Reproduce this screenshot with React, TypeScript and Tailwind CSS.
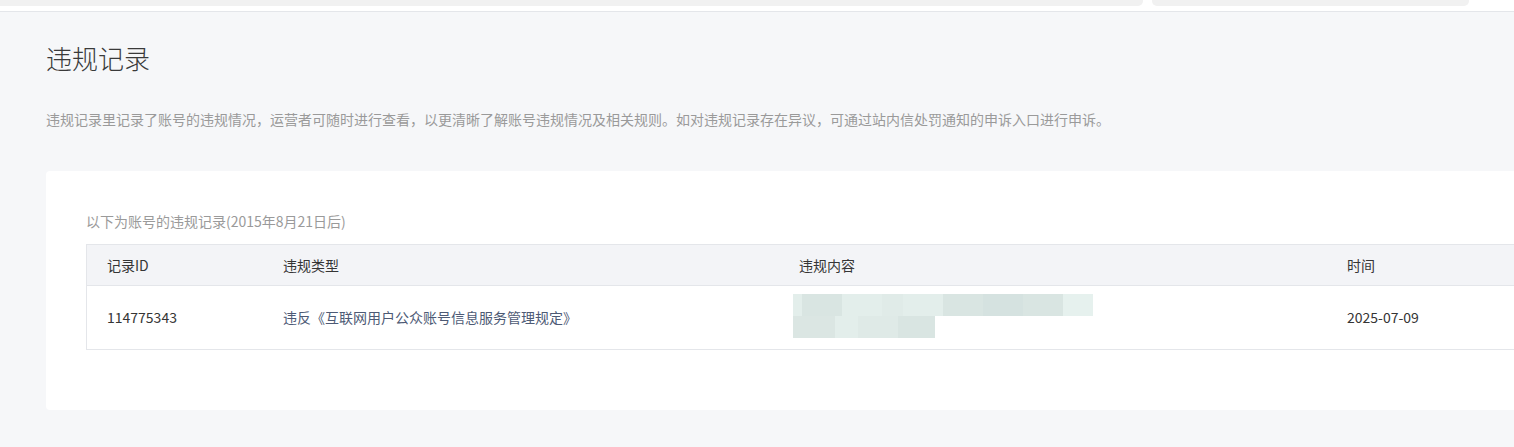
import React from 'react';

const mosaicTop: [number, string][] = [
  [9, '#e3eeeb'],
  [40, '#d9e5e2'],
  [40, '#e3eeeb'],
  [21, '#e0ebe8'],
  [40, '#e3eeeb'],
  [40, '#d9e5e2'],
  [40, '#d5e2e0'],
  [40, '#d9e5e2'],
  [30, '#e6f1ee'],
];

const mosaicBottom: [number, string][] = [
  [42, '#dbe6e3'],
  [23, '#e3eeeb'],
  [40, '#dfeae7'],
  [37, '#d9e5e2'],
];

const App: React.FC = () => {
  return (
    <div
      className="w-[1514px] h-[447px] overflow-hidden bg-[#f6f7f9]"
      style={{ fontFamily: '"Noto Sans CJK SC", "Noto Sans", sans-serif' }}
    >
      {/* top bar remnant */}
      <div className="h-[12px] bg-white border-b border-[#e4e6ea] flex items-start">
        <div className="w-[1143px] h-[6px] bg-[#f1f1f1] rounded-br-[5px]" />
        <div className="ml-[9px] w-[317px] h-[6px] bg-[#f1f1f1] rounded-b-[5px]" />
      </div>

      <div className="pl-[46px]">
        <h1 className="mt-[28px] text-[26px] leading-[36px] text-[#3a3a3a] font-light">违规记录</h1>
        <p className="mt-[33px] text-[14px] leading-[20px] text-[#9a9a9a] whitespace-nowrap">
          违规记录里记录了账号的违规情况，运营者可随时进行查看，以更清晰了解账号违规情况及相关规则。如对违规记录存在异议，可通过站内信处罚通知的申诉入口进行申诉。
        </p>

        <div className="mt-[42px] w-[1560px] h-[239px] bg-white rounded-[4px] pl-[40px] pt-[40px]">
          <div className="text-[14px] leading-[20px] text-[#9a9a9a]">以下为账号的违规记录(2015年8月21日后)</div>

          <div className="mt-[13px] border border-[#e4e6ea] text-[14px] text-[#353535]">
            <div className="flex h-[41px] items-center bg-[#f3f4f7] border-b border-[#e4e6ea]">
              <div className="w-[196px] pl-[20px]">记录ID</div>
              <div className="w-[516px]">违规类型</div>
              <div className="w-[548px]">违规内容</div>
              <div className="flex-1">时间</div>
            </div>
            <div className="flex h-[63px] items-center">
              <div className="w-[196px] pl-[20px]">114775343</div>
              <div className="w-[516px] text-[#4d5a75]">违反《互联网用户公众账号信息服务管理规定》</div>
              <div className="w-[548px] flex flex-col -ml-[6px] pr-[6px] mb-[3px]">
                <div className="flex h-[22px]">
                  {mosaicTop.map(([w, c], i) => (
                    <div key={i} className="h-full" style={{ width: w, background: c }} />
                  ))}
                </div>
                <div className="flex h-[22px]">
                  {mosaicBottom.map(([w, c], i) => (
                    <div key={i} className="h-full" style={{ width: w, background: c }} />
                  ))}
                </div>
              </div>
              <div className="flex-1 ml-[6px]">2025-07-09</div>
            </div>
          </div>
        </div>
      </div>
    </div>
  );
};

export default App;
